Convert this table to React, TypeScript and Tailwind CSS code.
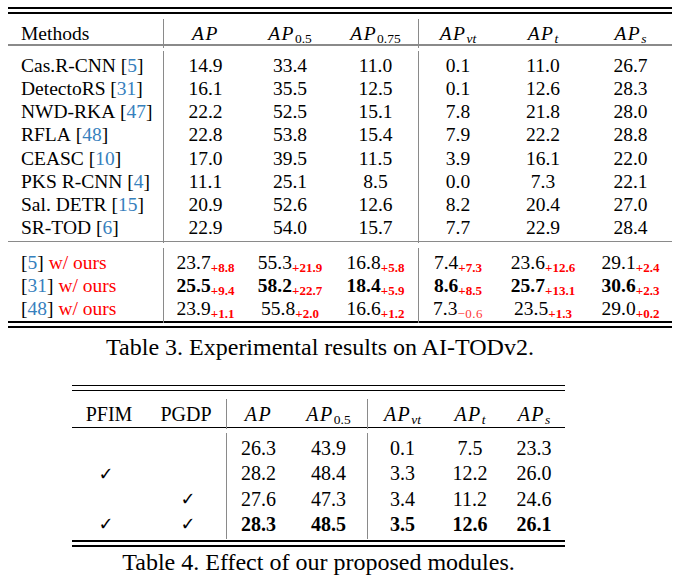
const cite = "text-[#3680bd]";
const red = "text-[#ff0000]";

type Cell = { v: string; d?: string; neg?: boolean };

const base3: [string, string, string[]][] = [
  ["Cas.R-CNN", "5", ["14.9", "33.4", "11.0", "0.1", "11.0", "26.7"]],
  ["DetectoRS", "31", ["16.1", "35.5", "12.5", "0.1", "12.6", "28.3"]],
  ["NWD-RKA", "47", ["22.2", "52.5", "15.1", "7.8", "21.8", "28.0"]],
  ["RFLA", "48", ["22.8", "53.8", "15.4", "7.9", "22.2", "28.8"]],
  ["CEASC", "10", ["17.0", "39.5", "11.5", "3.9", "16.1", "22.0"]],
  ["PKS R-CNN", "4", ["11.1", "25.1", "8.5", "0.0", "7.3", "22.1"]],
  ["Sal. DETR", "15", ["20.9", "52.6", "12.6", "8.2", "20.4", "27.0"]],
  ["SR-TOD", "6", ["22.9", "54.0", "15.7", "7.7", "22.9", "28.4"]],
];

const ours3: [string, boolean, Cell[]][] = [
  ["5", false, [
    { v: "23.7", d: "+8.8" }, { v: "55.3", d: "+21.9" }, { v: "16.8", d: "+5.8" },
    { v: "7.4", d: "+7.3" }, { v: "23.6", d: "+12.6" }, { v: "29.1", d: "+2.4" },
  ]],
  ["31", true, [
    { v: "25.5", d: "+9.4" }, { v: "58.2", d: "+22.7" }, { v: "18.4", d: "+5.9" },
    { v: "8.6", d: "+8.5" }, { v: "25.7", d: "+13.1" }, { v: "30.6", d: "+2.3" },
  ]],
  ["48", false, [
    { v: "23.9", d: "+1.1" }, { v: "55.8", d: "+2.0" }, { v: "16.6", d: "+1.2" },
    { v: "7.3", d: "−0.6", neg: true }, { v: "23.5", d: "+1.3" }, { v: "29.0", d: "+0.2" },
  ]],
];

const rows4: [boolean, boolean, boolean, string[]][] = [
  [false, false, false, ["26.3", "43.9", "0.1", "7.5", "23.3"]],
  [true, false, false, ["28.2", "48.4", "3.3", "12.2", "26.0"]],
  [false, true, false, ["27.6", "47.3", "3.4", "11.2", "24.6"]],
  [true, true, true, ["28.3", "48.5", "3.5", "12.6", "26.1"]],
];

const grid3 = "grid grid-cols-[155px_84px_86px_85px_79px_92px_83px]";
const grid4 = "grid grid-cols-[74px_80px_64px_77px_70px_66px_62px]";
const vline = "border-l-[1.5px] border-[#8a8a8a]";

function AP({ sub, italic }: { sub?: string; italic?: boolean }) {
  return (
    <span className="italic tracking-[1.5px]">
      AP
      {sub && (
        <sub className={`text-[13.5px] tracking-normal ${italic ? "italic" : "not-italic"}`}>{sub}</sub>
      )}
    </span>
  );
}

function Num({ c, bold }: { c: Cell; bold?: boolean }) {
  return (
    <span className={bold ? "font-bold" : ""}>
      {c.v}
      {c.d && (
        <sub className={`text-[13px] ${red} ${c.neg ? "font-normal tracking-[0.5px] opacity-80" : "font-bold"}`}>
          {c.d}
        </sub>
      )}
    </span>
  );
}

function DoubleRule() {
  return (
    <div>
      <div className="h-[1.5px] bg-black" />
      <div className="mt-[3.5px] h-[1.5px] bg-black" />
    </div>
  );
}

const headers3 = [
  <AP key="a" />,
  <AP key="b" sub="0.5" />,
  <AP key="c" sub="0.75" />,
  <AP key="d" sub="vt" italic />,
  <AP key="e" sub="t" italic />,
  <AP key="f" sub="s" italic />,
];

function Table3() {
  return (
    <div className="ml-[8px] mt-[7px] w-[664px] text-[19.5px]">
      <DoubleRule />
      <div className="pt-[5.5px] pb-[2px]">
        <div className={`${grid3} h-[23px]`}>
          <div className="flex items-center pl-[13px]">Methods</div>
          {headers3.map((h, i) => (
            <div key={i} className={`flex items-center justify-center ${i === 0 || i === 3 ? vline : ""}`}>
              {h}
            </div>
          ))}
        </div>
      </div>
      <div className="h-[1.5px] bg-[#8a8a8a]" />
      <div className="pt-[5px] pb-[4px]">
        {base3.map(([name, ref, vals]) => (
          <div key={name} className={`${grid3} h-[23.25px]`}>
            <div className="flex items-center pl-[13px] whitespace-nowrap">
              {name}&nbsp;[<span className={cite}>{ref}</span>]
            </div>
            {vals.map((v, i) => (
              <div key={i} className={`flex items-center justify-center ${i === 0 || i === 3 ? vline : ""}`}>
                {v}
              </div>
            ))}
          </div>
        ))}
      </div>
      <div className="h-[1.5px] bg-[#8a8a8a]" />
      <div className="pt-[5.5px] pb-[4.5px]">
        {ours3.map(([ref, bold, vals]) => (
          <div key={ref} className={`${grid3} h-[23px]`}>
            <div className="flex items-center pl-[13px] whitespace-nowrap">
              [<span className={cite}>{ref}</span>]&nbsp;<span className={red}>w/ ours</span>
            </div>
            {vals.map((c, i) => (
              <div key={i} className={`flex items-center justify-center ${i === 0 || i === 3 ? vline : ""}`}>
                <Num c={c} bold={bold} />
              </div>
            ))}
          </div>
        ))}
      </div>
      <DoubleRule />
    </div>
  );
}

function Check({ on }: { on: boolean }) {
  return on ? <span className="font-[DejaVu_Sans,sans-serif] font-normal text-[18px]">✓</span> : null;
}

function Table4() {
  return (
    <div className="ml-[72px] mt-[23.5px] w-[493px] text-[20px]">
      <DoubleRule />
      <div className="pt-[8px] pb-[1.5px]">
        <div className={`${grid4} h-[26px]`}>
          <div className="flex items-center justify-center">PFIM</div>
          <div className="flex items-center justify-center">PGDP</div>
          {[<AP key="a" />, <AP key="b" sub="0.5" />, <AP key="c" sub="vt" italic />, <AP key="d" sub="t" italic />, <AP key="e" sub="s" italic />].map((h, i) => (
            <div key={i} className={`flex items-center justify-center ${i === 0 || i === 2 ? vline : ""}`}>
              {h}
            </div>
          ))}
        </div>
      </div>
      <div className="h-[1.5px] bg-black" />
      <div className="pt-[5px] pb-[6px]">
        {rows4.map(([a, b, bold, vals], r) => (
          <div key={r} className={`${grid4} h-[25.3px] ${bold ? "font-bold" : ""}`}>
            <div className="flex items-center justify-center pr-[6px]">
              <Check on={a} />
            </div>
            <div className="flex items-center justify-center pl-[4px]">
              <Check on={b} />
            </div>
            {vals.map((v, i) => (
              <div key={i} className={`flex items-center justify-center ${i === 0 || i === 2 ? vline : ""}`}>
                {v}
              </div>
            ))}
          </div>
        ))}
      </div>
      <DoubleRule />
    </div>
  );
}

export default function App() {
  return (
    <div className="w-[680px] h-[586px] overflow-hidden bg-white text-black font-[Liberation_Serif,serif]">
      <Table3 />
      <div className="mt-[5.5px] w-[640px] text-center text-[24px] leading-[28px]">
        Table 3. Experimental results on AI-TODv2.
      </div>
      <Table4 />
      <div className="ml-[72px] mt-[1px] w-[493px] text-center text-[24px] leading-[28px]">
        Table 4. Effect of our proposed modules.
      </div>
    </div>
  );
}
